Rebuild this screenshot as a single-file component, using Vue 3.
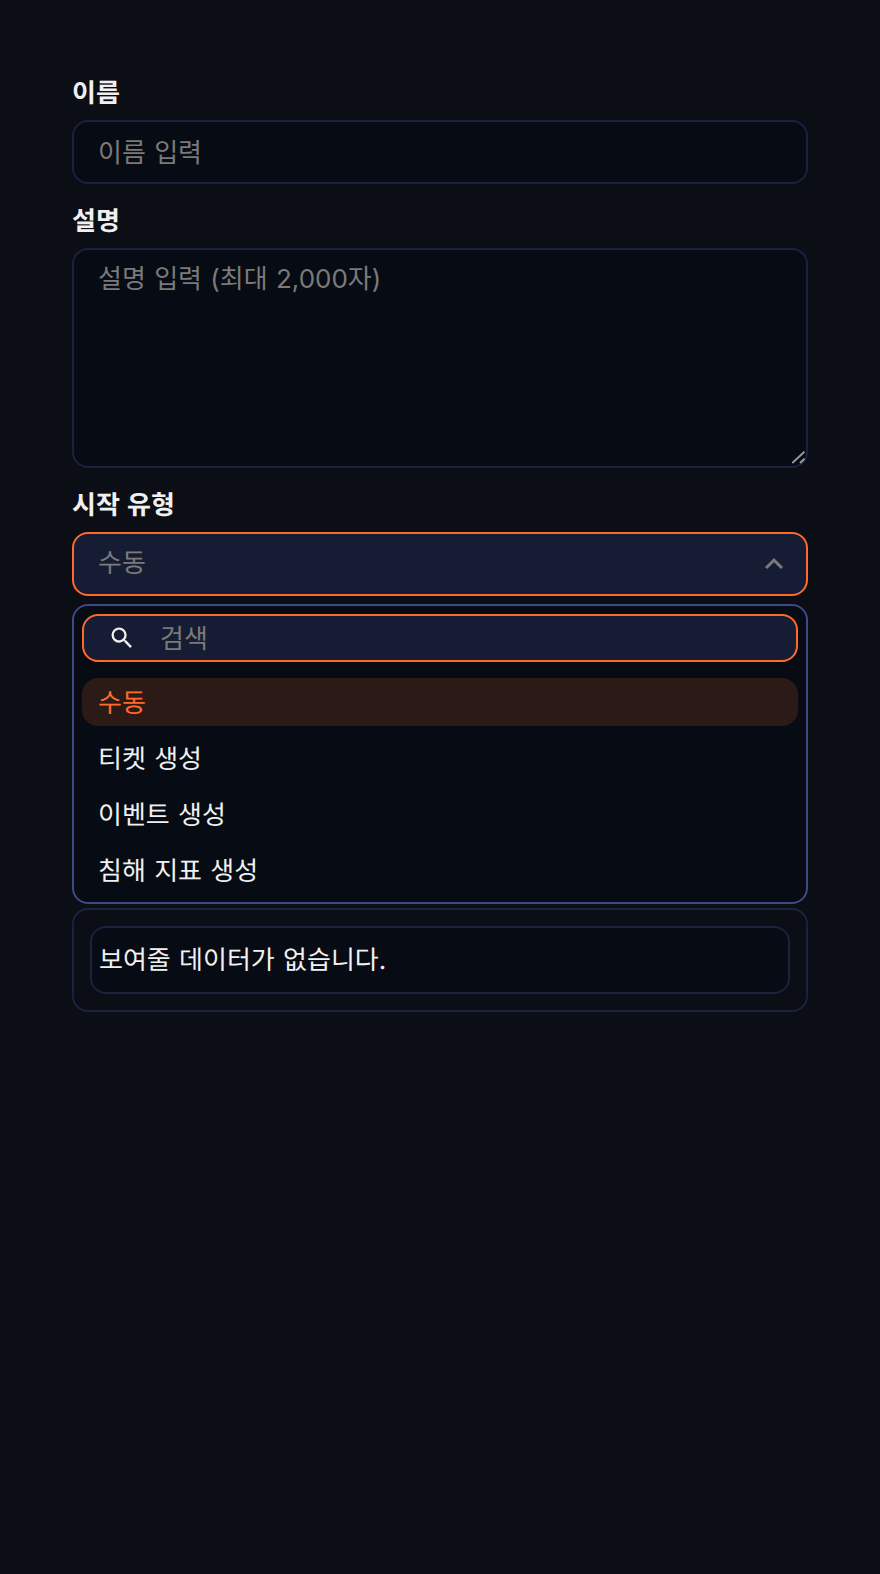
<template>
  <div class="page">
    <form class="form" @submit.prevent>
      <label class="field-label">이름</label>
      <input class="text-input" type="text" placeholder="이름 입력" />

      <label class="field-label">설명</label>
      <div class="area-wrap">
        <textarea class="text-area" placeholder="설명 입력 (최대 2,000자)"></textarea>
        <svg class="grip" viewBox="0 0 13 13" width="13" height="13">
          <path d="M0.3 12 12.5 0.7M8 12 12.5 7.8" />
        </svg>
      </div>

      <label class="field-label">시작 유형</label>
      <div class="select-box">
        <span class="select-value">{{ selected }}</span>
        <svg class="chevron" viewBox="0 0 24 24" width="36" height="36">
          <path d="M7.41 15.41 12 10.83l4.59 4.58L18 14l-6-6-6 6z" />
        </svg>
      </div>

      <div class="dropdown">
        <div class="search-box">
          <svg class="search-icon" viewBox="0 0 24 24" width="28" height="28">
            <path d="M15.5 14h-.79l-.28-.27A6.47 6.47 0 0 0 16 9.5 6.5 6.5 0 1 0 9.5 16c1.61 0 3.09-.59 4.23-1.57l.27.28v.79l5 4.99L20.49 19l-4.99-5zm-6 0C7.01 14 5 11.99 5 9.5S7.01 5 9.5 5 14 7.01 14 9.5 11.99 14 9.5 14z" />
          </svg>
          <input class="search-input" type="text" placeholder="검색" />
        </div>
        <ul class="options">
          <li
            v-for="opt in options"
            :key="opt"
            class="option"
            :class="{ active: opt === selected }"
          >{{ opt }}</li>
        </ul>
      </div>

      <div class="result-panel">
        <div class="empty-box">보여줄 데이터가 없습니다.</div>
      </div>
    </form>
  </div>
</template>

<script setup>
import { ref } from 'vue';

const selected = ref('수동');
const options = ['수동', '티켓 생성', '이벤트 생성', '침해 지표 생성'];
</script>

<style>
html,
body {
  margin: 0;
  background: #0b0e15;
}
</style>

<style scoped>
.page {
  min-height: 1574px;
  box-sizing: border-box;
  padding: 74px 72px 0;
  background: #0b0e15;
  font-family: Inter, "Noto Sans CJK KR", sans-serif;
  font-size: 26px;
  word-spacing: 1px;
  color: #f0f0f0;
  text-rendering: geometricPrecision;
}

.form {
  display: flex;
  flex-direction: column;
}

.field-label {
  height: 38px;
  line-height: 40px;
  margin-bottom: 8px;
  font-weight: 700;
  color: #f0f0f0;
}

.text-input,
.text-area {
  display: block;
  box-sizing: border-box;
  width: 100%;
  margin: 0;
  padding: 0 24px;
  border: 2px solid #1b2240;
  border-radius: 16px;
  outline: none;
  background: #070b13;
  color: #f0f0f0;
  font: inherit;
  word-spacing: inherit;
}

.text-input {
  height: 64px;
  margin-bottom: 18px;
}

.area-wrap {
  position: relative;
  height: 220px;
  margin-bottom: 18px;
}

.text-area {
  height: 100%;
  padding-top: 8px;
  resize: none;
}

.grip {
  position: absolute;
  right: 3px;
  bottom: 4px;
  fill: none;
  stroke: #9a9a9a;
  stroke-width: 2;
}

.text-input::placeholder,
.text-area::placeholder,
.search-input::placeholder {
  color: #7a7a7a;
  opacity: 1;
}

.select-box {
  display: flex;
  align-items: center;
  justify-content: space-between;
  box-sizing: border-box;
  height: 64px;
  padding: 0 14px 0 24px;
  margin-bottom: 8px;
  border: 2px solid #ff6a2b;
  border-radius: 16px;
  background: #161c34;
}

.select-value {
  margin-bottom: 6px;
  color: #7a7a7a;
}

.chevron {
  fill: #7a7a7a;
}

.dropdown {
  box-sizing: border-box;
  padding: 8px;
  margin-bottom: 4px;
  border: 2px solid #3d4a85;
  border-radius: 16px;
  background: #070b13;
}

.search-box {
  display: flex;
  align-items: center;
  box-sizing: border-box;
  height: 48px;
  padding-left: 24px;
  border: 2px solid #ff6a2b;
  border-radius: 16px;
  background: #161c34;
}

.search-icon {
  flex: none;
  fill: #f0f0f0;
}

.search-input {
  flex: 1;
  min-width: 0;
  margin-left: 24px;
  padding: 0;
  border: none;
  outline: none;
  background: transparent;
  color: #f0f0f0;
  font: inherit;
}

.options {
  display: flex;
  flex-direction: column;
  gap: 8px;
  margin: 16px 0 0;
  padding: 0;
  list-style: none;
}

.option {
  box-sizing: border-box;
  height: 48px;
  line-height: 45px;
  padding: 3px 16px 0;
  border-radius: 16px;
  color: #f0f0f0;
}

.option.active {
  background: #2c1a17;
  color: #ff6a2b;
}

.result-panel {
  box-sizing: border-box;
  padding: 16px;
  border: 2px solid #1b2240;
  border-radius: 16px;
}

.empty-box {
  box-sizing: border-box;
  height: 68px;
  line-height: 66px;
  padding: 0 7px;
  border: 2px solid #1b2240;
  border-radius: 16px;
  background: #070b13;
  color: #f0f0f0;
}
</style>
